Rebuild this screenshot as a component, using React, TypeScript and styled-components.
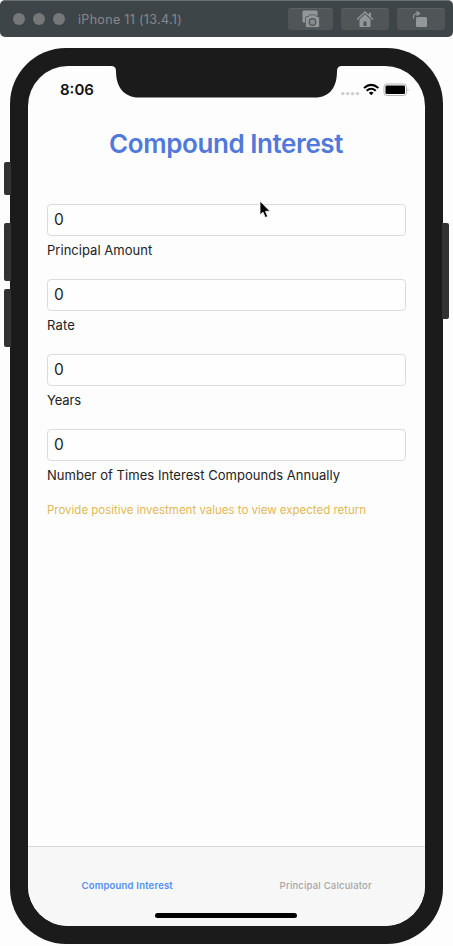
import React from "react";
import styled, { createGlobalStyle } from "styled-components";

const GlobalStyle = createGlobalStyle`
  * { box-sizing: border-box; }
  body { margin: 0; background: #fdfdfd; font-family: Inter, "Liberation Sans", sans-serif; }
`;

const Window = styled.div`
  width: 453px;
  height: 946px;
  display: flex;
  flex-direction: column;
  align-items: center;
  gap: 11px;
  overflow: hidden;
  background: #fdfdfd;
`;

const TitleBar = styled.header`
  width: 453px;
  height: 37px;
  flex: none;
  display: flex;
  align-items: center;
  padding: 0 8px 0 13px;
  border-top: 1px solid #6b7073;
  border-radius: 5px;
  background: #3e4549;
`;

const Lights = styled.div`
  display: flex;
  gap: 8px;
`;

const Light = styled.span`
  width: 12px;
  height: 12px;
  border-radius: 50%;
  background: #757778;
`;

const DeviceName = styled.span`
  margin-left: 13px;
  padding-top: 2px;
  flex: 1;
  font-size: 12.5px;
  line-height: 16px;
  letter-spacing: 0.32px;
  color: #85898c;
`;

const Tools = styled.div`
  display: flex;
  gap: 8px;
`;

const ToolButton = styled.button<{ $width: number }>`
  width: ${(p) => p.$width}px;
  height: 22px;
  padding: 0;
  border: 0;
  border-top: 1px solid #5c6163;
  border-radius: 3px;
  background: #505557;
  display: flex;
  align-items: center;
  justify-content: center;
  svg { display: block; margin-top: -1px; }
`;

const Phone = styled.main`
  position: relative;
  width: 433px;
  height: 896px;
  flex: none;
  padding: 18px;
  border-radius: 56px;
  background: #1b1b1b;
`;

const SideButton = styled.span<{ $side: "left" | "right"; $top: number; $height: number }>`
  position: absolute;
  ${(p) => p.$side}: -6px;
  top: ${(p) => p.$top}px;
  width: 7px;
  height: ${(p) => p.$height}px;
  border-radius: ${(p) => (p.$side === "left" ? "2px 0 0 2px" : "0 2px 2px 0")};
  background: #323232;
`;

const Screen = styled.div`
  position: relative;
  width: 397px;
  height: 860px;
  display: flex;
  flex-direction: column;
  overflow: hidden;
  border-radius: 40px;
  background: #fdfdfd;
`;

const Notch = styled.svg`
  position: absolute;
  left: 83px;
  top: 0;
`;

const StatusBar = styled.div`
  height: 48px;
  flex: none;
  display: flex;
  align-items: center;
  justify-content: space-between;
  padding: 0 16px 0 32px;
`;

const Clock = styled.span`
  font-size: 15px;
  font-weight: 600;
  line-height: 20px;
  color: #111;
`;

const Title = styled.h1`
  margin: 12px 0 0;
  padding-right: 1px;
  height: 36px;
  line-height: 36px;
  text-align: center;
  font-size: 26px;
  font-weight: 600;
  letter-spacing: -0.42px;
  color: #5079db;
`;

const Form = styled.form`
  flex: 1;
  padding: 42px 19px 0;
`;

const Field = styled.label`
  display: flex;
  flex-direction: column;
  height: 75px;
`;

const Input = styled.input`
  height: 32px;
  width: 359px;
  padding: 0 6px 1px;
  border: 1px solid #dcdcdc;
  border-radius: 4px;
  background: #fefefe;
  font: 400 15.5px Inter, sans-serif;
  color: #1c1c1c;
  outline: none;
`;

const Caption = styled.span<{ $spacing: number }>`
  margin-top: 5px;
  font-size: 13px;
  line-height: 18px;
  letter-spacing: ${(p) => p.$spacing}px;
  color: #222;
`;

const Hint = styled.p`
  margin: -2px 0 0;
  font-size: 11.5px;
  line-height: 17px;
  letter-spacing: -0.01px;
  white-space: nowrap;
  color: #e0b954;
`;

const TabBar = styled.nav`
  height: 80px;
  flex: none;
  display: grid;
  grid-template-columns: 1fr 1fr;
  border-top: 1px solid #d9d9d9;
  background: #f7f7f7;
`;

const Tab = styled.a<{ $active?: boolean }>`
  padding-top: 32px;
  text-align: center;
  font-size: 9.5px;
  line-height: 14px;
  letter-spacing: 0.19px;
  font-weight: ${(p) => (p.$active ? 600 : 500)};
  color: ${(p) => (p.$active ? "#4f90f0" : "#a6a6a6")};
`;

const HomeIndicator = styled.span`
  position: absolute;
  left: 127px;
  bottom: 8px;
  width: 142px;
  height: 5px;
  border-radius: 3px;
  background: #000;
`;

const Pointer = styled.svg`
  position: absolute;
  left: 249px;
  top: 153px;
`;

const CameraIcon = () => (
  <svg width="20" height="20" viewBox="0 0 20 20">
    <path d="M2.500 1.500h13l1 1v6H9L7.500 7.500 6 9H5v4.500H2.500L1.500 13V2.500z" fill="#929799" />
    <path d="M8.500 5.800h6l1 1.700H17q1.500 0 1.500 1.500v8q0 1.500-1.500 1.500H6q-1.500 0-1.500-1.500V9Q4.500 7.500 6 7.500h1.500z" fill="#929799" stroke="#505557" strokeWidth=".8" />
    <circle cx="11.500" cy="13" r="3.300" fill="#858a8c" stroke="#505557" strokeWidth="1.200" />
  </svg>
);

const HomeIcon = () => (
  <svg width="18" height="18" viewBox="0 0 18 18">
    <path d="M1 9.500 9 2l8 7.500" fill="none" stroke="#929799" strokeWidth="1.300" />
    <path d="M13 2.800h2v5l-2-2z" fill="#929799" />
    <path d="m9 4.300 5.500 5.200V16q0 1-1 1h-9q-1 0-1-1V9.500z" fill="#929799" />
    <path d="M7.500 11.500h3V16h-3z" fill="#505557" />
  </svg>
);

const RotateIcon = () => (
  <svg width="20" height="18" viewBox="0 0 20 18">
    <path d="M2.500 8.500V7q0-3.500 4-3.500" fill="none" stroke="#929799" strokeWidth="1.200" />
    <path d="m5.500.8 4.200 2.700-4.200 2.700z" fill="#929799" />
    <rect x="5" y="7" width="11" height="10" rx="1.500" fill="#929799" />
  </svg>
);

const StatusIcons = () => (
  <svg width="68" height="16" viewBox="0 0 68 16">
    <g fill="#cbcbcb">
      <circle cx="1.800" cy="11.600" r="1.700" />
      <circle cx="6.700" cy="11.600" r="1.700" />
      <circle cx="11.600" cy="11.600" r="1.700" />
      <circle cx="16.500" cy="11.600" r="1.700" />
    </g>
    <g fill="none" stroke="#000" strokeWidth="2">
      <path d="M23 6q7.200-6.300 14.400 0" />
      <path d="M25.600 8.700q4.600-4 9.200 0" />
    </g>
    <path d="m27.800 10.800q2.400-2 4.800 0L30.200 13.300z" fill="#000" />
    <rect x="43" y="2" width="22.500" height="11.500" rx="2.800" fill="#fdfdfd" stroke="#b5b5b5" strokeWidth="1" />
    <rect x="44.500" y="3.500" width="19.500" height="8.500" rx="1.300" fill="#000" />
    <path d="M66.700 6q1.500 1.800 0 3.600z" fill="#aaa" />
  </svg>
);

const fields = [
  { label: "Principal Amount", spacing: 0.03 },
  { label: "Rate", spacing: 0.15 },
  { label: "Years", spacing: -0.1 },
  { label: "Number of Times Interest Compounds Annually", spacing: 0.04 },
];

export default function App() {
  return (
    <>
      <GlobalStyle />
      <Window>
        <TitleBar>
          <Lights>
            <Light />
            <Light />
            <Light />
          </Lights>
          <DeviceName>iPhone 11 (13.4.1)</DeviceName>
          <Tools>
            <ToolButton $width={45} aria-label="Screenshot"><CameraIcon /></ToolButton>
            <ToolButton $width={48} aria-label="Home"><HomeIcon /></ToolButton>
            <ToolButton $width={48} aria-label="Rotate"><RotateIcon /></ToolButton>
          </Tools>
        </TitleBar>
        <Phone>
          <SideButton $side="left" $top={114} $height={33} />
          <SideButton $side="left" $top={175} $height={58} />
          <SideButton $side="left" $top={241} $height={58} />
          <SideButton $side="right" $top={175} $height={96} />
          <Screen>
            <Notch width="232" height="32" viewBox="0 0 232 32">
              <path d="M0 0Q5 0 5 5C5 21 13 31.500 28 31.500H204C219 31.500 226 21 226 5Q226 0 231 0Z" fill="#1b1b1b" />
            </Notch>
            <StatusBar>
              <Clock>8:06</Clock>
              <StatusIcons />
            </StatusBar>
            <Title>Compound Interest</Title>
            <Form>
              {fields.map((f) => (
                <Field key={f.label}>
                  <Input defaultValue="0" />
                  <Caption $spacing={f.spacing}>{f.label}</Caption>
                </Field>
              ))}
              <Hint>Provide positive investment values to view expected return</Hint>
            </Form>
            <TabBar>
              <Tab $active>Compound Interest</Tab>
              <Tab>Principal Calculator</Tab>
            </TabBar>
            <HomeIndicator />
          </Screen>
          <Pointer width="12" height="18" viewBox="0 0 12 18">
            <path d="M1 0v14l3-2.800 2.300 5.300 2.400-1-2.200-5.200H11z" fill="#000" stroke="#fff" strokeWidth=".8" />
          </Pointer>
        </Phone>
      </Window>
    </>
  );
}
